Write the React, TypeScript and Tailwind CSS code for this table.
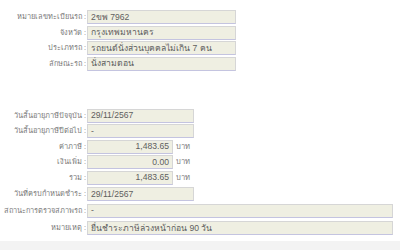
import React from "react";

const font = { fontFamily: "Tahoma, 'Liberation Sans', 'Noto Sans', sans-serif" };

function Row({
  label,
  value,
  width,
  right,
  unit,
  className = "",
}: {
  label: string;
  value: string;
  width: string;
  right?: boolean;
  unit?: string;
  className?: string;
}) {
  return (
    <div className={`flex items-center h-[14px] ${className}`}>
      <div className="w-[87px] shrink-0 flex justify-end pr-[1px] text-[7.4px] text-[#7a7a7a] whitespace-nowrap leading-none">
        <span>{label} :</span>
      </div>
      <div
        className={`${width} h-[14px] shrink-0 bg-[#efefe2] border border-[#d6d6d6] border-b-[#c4c4e0] flex items-center px-[3px] text-[8.6px] text-[#5e5e5e] leading-none whitespace-nowrap ${
          right ? "justify-end" : ""
        }`}
      >
        {value}
      </div>
      {unit && (
        <div className="ml-[3px] text-[7.6px] text-[#7a7a7a] leading-none">{unit}</div>
      )}
    </div>
  );
}

export default function App() {
  return (
    <div className="w-[400px] h-[250px] bg-white relative overflow-hidden" style={font}>
      <div className="pt-[10px] flex flex-col gap-[1.5px]">
        <Row label="หมายเลขทะเบียนรถ" value="2ขพ 7962" width="w-[149px]" />
        <Row label="จังหวัด" value="กรุงเทพมหานคร" width="w-[149px]" />
        <Row label="ประเภทรถ" value="รถยนต์นั่งส่วนบุคคลไม่เกิน 7 คน" width="w-[149px]" />
        <Row label="ลักษณะรถ" value="นั่งสามตอน" width="w-[149px]" />
      </div>
      <div className="pt-[38px] flex flex-col gap-[1.5px]">
        <Row label="วันสิ้นอายุภาษีปัจจุบัน" value="29/11/2567" width="w-[107px]" />
        <Row label="วันสิ้นอายุภาษีปีต่อไป" value="-" width="w-[107px]" />
        <Row label="ค่าภาษี" value="1,483.65" width="w-[86px]" right unit="บาท" />
        <Row label="เงินเพิ่ม" value="0.00" width="w-[86px]" right unit="บาท" />
        <Row label="รวม" value="1,483.65" width="w-[86px]" right unit="บาท" />
        <Row label="วันที่ครบกำหนดชำระ" value="29/11/2567" width="w-[107px]" className="mt-[1px]" />
        <Row label="สถานะการตรวจสภาพรถ" value="-" width="w-[306px]" className="mt-[1px]" />
        <Row label="หมายเหตุ" value="ยื่นชำระภาษีล่วงหน้าก่อน 90 วัน" width="w-[306px]" className="mt-[2px]" />
      </div>
      <div className="absolute left-0 right-0 bottom-0 h-[9px] bg-[#f3f3f3]" />
    </div>
  );
}
